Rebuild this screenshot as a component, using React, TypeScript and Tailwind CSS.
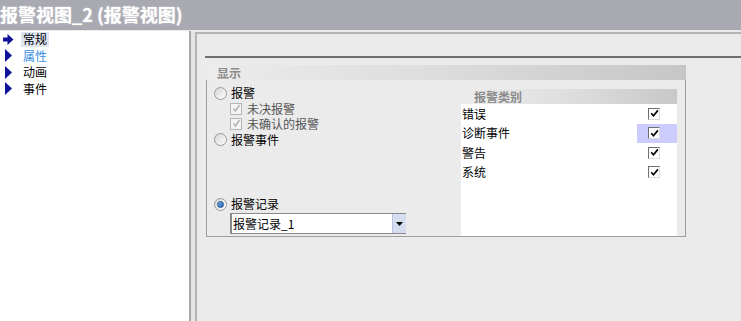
import { Fragment } from 'react'

const font = { fontFamily: '"Noto Sans CJK SC", "Noto Sans", sans-serif' }

const treeItems = [
  { label: '常规', selected: true, link: false },
  { label: '属性', selected: false, link: true },
  { label: '动画', selected: false, link: false },
  { label: '事件', selected: false, link: false },
]

const categories = ['错误', '诊断事件', '警告', '系统']

function TreeArrow({ bold }: { bold: boolean }) {
  if (bold) {
    return (
      <svg width="11" height="13" viewBox="0 0 11 13" className="shrink-0">
        <path d="M0 4.5h4.5V1l6 5.5-6 5.5V8.5H0z" fill="#10139a" />
      </svg>
    )
  }
  return (
    <svg width="11" height="13" viewBox="0 0 11 13" className="shrink-0">
      <path d="M2 0l7 6.5L2 13z" fill="#10139a" />
    </svg>
  )
}

function Radio({ checked }: { checked?: boolean }) {
  return (
    <span className="flex h-[13px] w-[13px] shrink-0 items-center justify-center rounded-full border border-[#9a9a9a] bg-gradient-to-br from-[#d6d6d6] to-[#ffffff]">
      {checked && (
        <span className="h-[7px] w-[7px] rounded-full border border-[#1c4f8a] bg-gradient-to-br from-[#7fb4ea] to-[#1d5fae]" />
      )}
    </span>
  )
}

function GrayCheck() {
  return (
    <span className="flex h-[12px] w-[12px] shrink-0 items-center justify-center border border-[#b5b5b5] bg-[#f4f4f4]">
      <svg width="9" height="9" viewBox="0 0 9 9">
        <path d="M1.5 4.5l2 2.5 4-6" fill="none" stroke="#b0b0b0" strokeWidth="1.4" />
      </svg>
    </span>
  )
}

function BlackCheck() {
  return (
    <span className="flex h-[12px] w-[12px] shrink-0 items-center justify-center border border-t-[#6e6e6e] border-l-[#6e6e6e] border-r-[#dcdcdc] border-b-[#dcdcdc] bg-white">
      <svg width="9" height="9" viewBox="0 0 9 9">
        <path d="M1.2 4.2l2.3 2.6 4.4-5.4" fill="none" stroke="#000" strokeWidth="1.7" />
      </svg>
    </span>
  )
}

export default function App() {
  return (
    <div className="flex h-[321px] w-[741px] flex-col overflow-hidden bg-[#ebebeb] text-[12px] leading-none text-black" style={font}>
      <div className="flex h-[30px] shrink-0 items-center bg-[#a8a9b1] pb-[2px] text-[18px] font-bold text-white [text-shadow:0_0_2px_rgba(255,255,255,0.6)]">
        报警视图_2 (报警视图)
      </div>

      <div className="flex flex-1 pt-[1px]">
        <aside className="w-[191px] shrink-0 border-r-2 border-[#a6a6a6] bg-white">
          {treeItems.map((item) => (
            <div key={item.label} className="flex h-[16.5px] items-center gap-[7px] pl-[3px]">
              <TreeArrow bold={item.selected} />
              <span
                className={
                  item.selected
                    ? 'flex h-[15px] items-center bg-[#dde4f2] px-[2px]'
                    : item.link
                      ? 'px-[2px] text-[#3a8ee6]'
                      : 'px-[2px]'
                }
              >
                {item.label}
              </span>
            </div>
          ))}
        </aside>

        <div className="w-[4px] shrink-0 bg-[#e6e6e6]" />

        <main className="mt-[1px] flex flex-1 flex-col border-l-2 border-t-2 border-[#b4b4b4] bg-[#ebebeb]">
          <div className="ml-[8px] mt-[22px] h-[2px] bg-[#6f6f6f]" />

          <section className="ml-[9px] mt-[7px] flex w-[480px] flex-col">
            <div className="flex h-[15px] items-center bg-gradient-to-r from-[#ececec] via-[#dcdcdc] to-[#c6c6c6] pl-[11px] text-[12px] font-bold text-[#8c8c8c]">
              显示
            </div>
            <div className="flex h-[157px] border-x border-b border-[#9e9e9e]">
              <div className="flex w-[254px] flex-col pl-[7px]">
                <label className="mt-[5px] flex h-[16px] items-center gap-[4px]">
                  <Radio />
                  <span>报警</span>
                </label>
                <label className="flex h-[15px] items-center gap-[5px] pl-[16px] text-[#555]">
                  <GrayCheck />
                  <span>未决报警</span>
                </label>
                <label className="flex h-[15px] items-center gap-[5px] pl-[16px] text-[#555]">
                  <GrayCheck />
                  <span>未确认的报警</span>
                </label>
                <label className="flex h-[17px] items-center gap-[4px]">
                  <Radio />
                  <span>报警事件</span>
                </label>
                <label className="mt-[48px] flex h-[16px] items-center gap-[4px]">
                  <Radio checked />
                  <span>报警记录</span>
                </label>
                <div className="ml-[16px] mt-[1px] flex h-[21px] w-[176px] border-l-2 border-t border-b border-[#8a8a8a] bg-white">
                  <span className="flex flex-1 items-center pl-[1px]">报警记录_1</span>
                  <span className="flex w-[14px] items-center justify-center border-l border-[#b8c2da] bg-[#d6ddf0]">
                    <svg width="7" height="4" viewBox="0 0 7 4">
                      <path d="M0 0h7L3.5 4z" fill="#000" />
                    </svg>
                  </span>
                </div>
              </div>

              <div className="mt-[9px] flex w-[216px] flex-col bg-white">
                <div className="flex h-[15px] items-center bg-gradient-to-r from-[#ececec] via-[#dedede] to-[#c8c8c8] pl-[13px] font-bold text-[#8c8c8c]">
                  报警类别
                </div>
                {categories.map((c, i) => (
                  <Fragment key={c}>
                    <div className="flex h-[19.5px] items-center pl-[1px]">
                      <span className="flex-1">{c}</span>
                      <span
                        className={
                          i === 1
                            ? 'flex h-[19px] w-[40px] items-center bg-[#ccccff] pl-[11px]'
                            : 'flex h-[19px] w-[40px] items-center pl-[11px]'
                        }
                      >
                        <BlackCheck />
                      </span>
                    </div>
                  </Fragment>
                ))}
              </div>
            </div>
          </section>
        </main>
      </div>
    </div>
  )
}
